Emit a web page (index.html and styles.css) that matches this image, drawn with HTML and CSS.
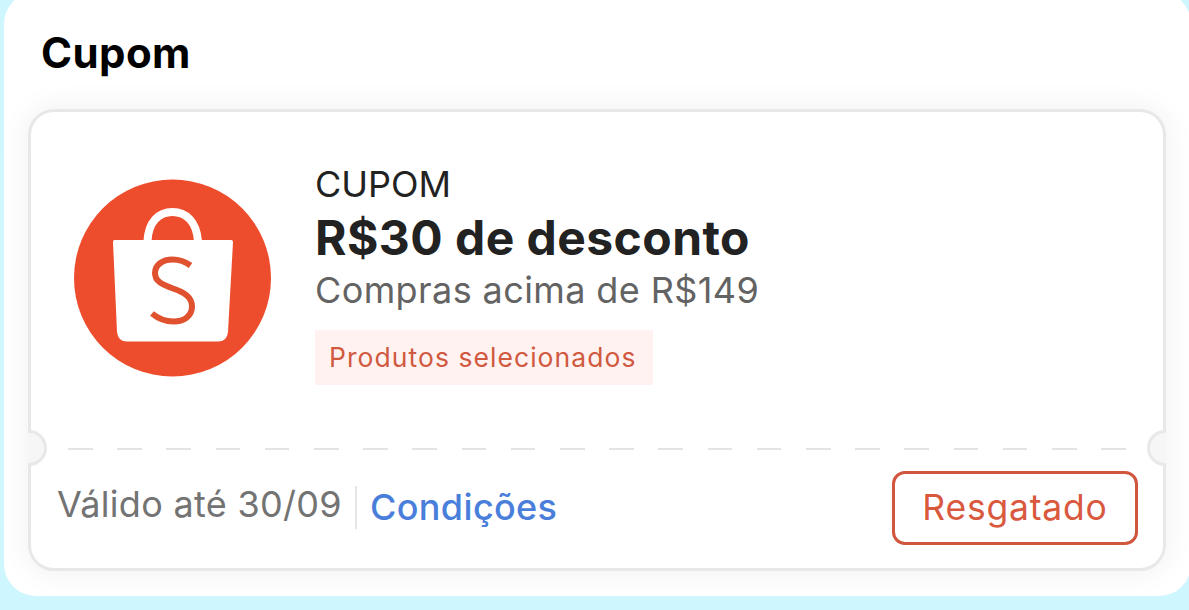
FILE: index.html
```html
<!DOCTYPE html>
<html lang="pt-BR">
<head>
  <meta charset="UTF-8">
  <meta name="viewport" content="width=device-width, initial-scale=1.0">
  <title>Cupom</title>
  <link rel="stylesheet" href="styles.css">
</head>
<body>
  <div class="panel">
    <h2>Cupom</h2>
    <div class="coupon">
      <div class="coupon-body">
        <svg class="logo" viewBox="0 0 198 198">
          <circle cx="98.500" cy="99" r="98.5" fill="#ee4d2d"/>
          <path d="M73.500 62C74.500 43 84.500 33 98.500 33S122.500 43 124 62" fill="none" stroke="#fff" stroke-width="8"/>
          <path d="M40.500 61H157Q159 61 159 63L154 153Q153 162.500 144 162.500H53Q44 162.500 43 153L39 63Q39 61 40.500 61Z" fill="#fff"/>
          <path d="M116.500 86.500C111 82.500 105 80.500 98.500 80.500C88.500 80.500 81 86 81 94C81 102.500 88 105.500 99 109.500C110.500 113.500 118 118 118 127.500C118 137 110 142.500 99.500 142.500C91 142.500 84 139.500 78 134.500" fill="none" stroke="#e0512f" stroke-width="6"/>
        </svg>
        <div class="info">
          <div class="type">CUPOM</div>
          <div class="discount">R$30 de desconto</div>
          <div class="minimum">Compras acima de R$149</div>
          <span class="tag">Produtos selecionados</span>
        </div>
      </div>
      <div class="tear">
        <span class="notch notch-left"></span>
        <span class="notch notch-right"></span>
      </div>
      <div class="coupon-footer">
        <span class="validity">Válido até 30/09</span>
        <a class="terms">Condições</a>
        <button type="button">Resgatado</button>
      </div>
    </div>
  </div>
</body>
</html>
```
FILE: styles.css
```css
* {
  box-sizing: border-box;
}
body {
  margin: 0;
  height: 610px;
  overflow: hidden;
  background-color: #cdf6ff;
  font-family: Inter, "Liberation Sans", sans-serif;
}
.panel {
  width: 1187px;
  height: 604px;
  margin: -8px 0 0 4px;
  padding: 36px 25px 0 24px;
  background-color: #fff;
  border-radius: 32px;
  overflow: hidden;
}
h2 {
  margin: 0 0 31px 13px;
  font-size: 42px;
  line-height: 50px;
  font-weight: 700;
  letter-spacing: 0.4px;
  color: #000;
}
.coupon {
  display: flex;
  flex-direction: column;
  height: 462px;
  background-color: #fff;
  border: 3px solid #e8e8e8;
  border-radius: 26px;
  box-shadow: 0 0 28px 4px rgba(0, 0, 0, 0.05);
}
.coupon-body {
  display: flex;
  height: 336px;
  padding: 49px 0 0 43px;
}
.logo {
  width: 198px;
  height: 198px;
  margin-top: 18px;
}
.info {
  margin-left: 43px;
  white-space: nowrap;
}
.type {
  font-size: 36px;
  line-height: 47px;
  color: #222;
}
.discount {
  font-size: 48px;
  line-height: 60px;
  font-weight: 700;
  letter-spacing: 0.45px;
  color: #222;
}
.minimum {
  font-size: 36px;
  line-height: 44px;
  letter-spacing: 0.4px;
  color: #636363;
}
.tag {
  display: block;
  width: 338px;
  height: 55px;
  margin-top: 18px;
  padding-left: 14px;
  background-color: #fff2f1;
  color: #d0593f;
  font-size: 26.500px;
  line-height: 55px;
  letter-spacing: 1.05px;
}
.tear {
  position: relative;
  height: 2px;
  margin: 0 36px 0 37px;
  background: repeating-linear-gradient(to right, #e3e3e3 0 24.600px, transparent 24.600px 49.200px);
}
/* half circles cut out of the card border */
.notch {
  position: absolute;
  top: -18px;
  width: 19px;
  height: 36px;
  background-color: #f6f6f6;
  border: 3px solid #e8e8e8;
}
.notch-left {
  left: -40px;
  border-left: none;
  border-radius: 0 18px 18px 0;
}
.notch-right {
  right: -39px;
  border-right: none;
  border-radius: 18px 0 0 18px;
}
.coupon-footer {
  display: flex;
  align-items: flex-start;
  padding: 21px 25px 0 26px;
  white-space: nowrap;
}
.validity {
  width: 300px;
  height: 43px;
  margin-top: 15px;
  border-right: 2px solid #e5e5e5;
  color: #737373;
  font-size: 36px;
  line-height: 37px;
  letter-spacing: 0.3px;
}
.terms {
  margin: 15px 0 0 13px;
  color: #4a7edb;
  font-size: 36px;
  line-height: 43px;
  font-weight: 500;
  letter-spacing: 0.35px;
}
button {
  width: 246px;
  height: 74px;
  margin-left: auto;
  padding: 0;
  background-color: #fff;
  border: 3px solid #d0563e;
  border-radius: 13px;
  color: #d9593f;
  font-family: inherit;
  font-size: 35.500px;
  line-height: 68px;
  letter-spacing: 0.8px;
}
```
